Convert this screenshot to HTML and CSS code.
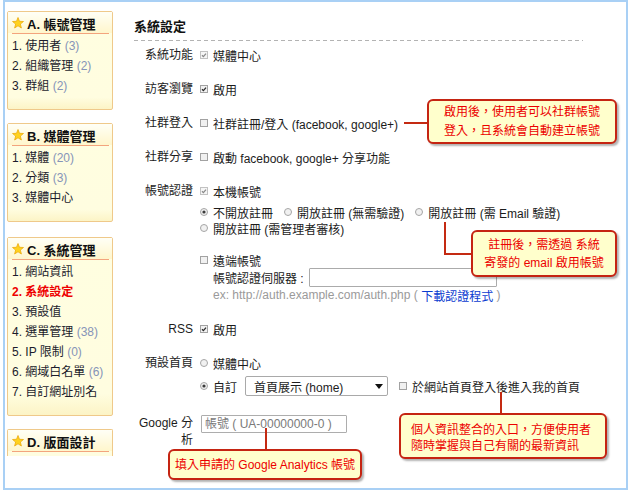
FILE: index.html
```html
<!DOCTYPE html>
<html lang="zh-Hant">
<head>
<meta charset="utf-8">
<title>系統設定</title>
<link rel="stylesheet" href="styles.css">
</head>
<body>
<div class="frame">
  <aside class="sidebar">
    <section class="panel">
      <h3 class="panel-head"><svg class="star" viewBox="0 0 12 12"><polygon points="6,0.5 7.47,4.28 11.5,4.5 8.38,7.07 9.4,11 6,8.8 2.6,11 3.62,7.07 0.5,4.5 4.53,4.28"/></svg>A. 帳號管理</h3>
      <div class="panel-sep"></div>
      <ul class="panel-list">
        <li>1. 使用者 <span class="cnt">(3)</span></li>
        <li>2. 組織管理 <span class="cnt">(2)</span></li>
        <li>3. 群組 <span class="cnt">(2)</span></li>
      </ul>
    </section>
    <section class="panel">
      <h3 class="panel-head"><svg class="star" viewBox="0 0 12 12"><polygon points="6,0.5 7.47,4.28 11.5,4.5 8.38,7.07 9.4,11 6,8.8 2.6,11 3.62,7.07 0.5,4.5 4.53,4.28"/></svg>B. 媒體管理</h3>
      <div class="panel-sep"></div>
      <ul class="panel-list">
        <li>1. 媒體 <span class="cnt">(20)</span></li>
        <li>2. 分類 <span class="cnt">(3)</span></li>
        <li>3. 媒體中心</li>
      </ul>
    </section>
    <section class="panel panel-c">
      <h3 class="panel-head"><svg class="star" viewBox="0 0 12 12"><polygon points="6,0.5 7.47,4.28 11.5,4.5 8.38,7.07 9.4,11 6,8.8 2.6,11 3.62,7.07 0.5,4.5 4.53,4.28"/></svg>C. 系統管理</h3>
      <div class="panel-sep"></div>
      <ul class="panel-list">
        <li>1. 網站資訊</li>
        <li class="active">2. 系統設定</li>
        <li>3. 預設值</li>
        <li>4. 選單管理 <span class="cnt">(38)</span></li>
        <li>5. IP 限制 <span class="cnt">(0)</span></li>
        <li>6. 網域白名單 <span class="cnt">(6)</span></li>
        <li>7. 自訂網址別名</li>
      </ul>
    </section>
    <section class="panel panel-cut">
      <h3 class="panel-head"><svg class="star" viewBox="0 0 12 12"><polygon points="6,0.5 7.47,4.28 11.5,4.5 8.38,7.07 9.4,11 6,8.8 2.6,11 3.62,7.07 0.5,4.5 4.53,4.28"/></svg>D. 版面設計</h3>
      <div class="panel-sep"></div>
    </section>
  </aside>

  <main class="main">
    <h2 class="title">系統設定</h2>
    <div class="form">
      <div class="row">
        <div class="lbl">系統功能</div>
        <div class="val">
          <div class="line"><span class="opt"><svg class="cb dis" viewBox="0 0 8 8"><rect x=".5" y=".5" width="7" height="7"/><path d="M2 4.2l1.4 1.4L6 2.6"/></svg>媒體中心</span></div>
        </div>
      </div>
      <div class="row">
        <div class="lbl">訪客瀏覽</div>
        <div class="val">
          <div class="line"><span class="opt"><svg class="cb" viewBox="0 0 8 8"><rect x=".5" y=".5" width="7" height="7"/><path d="M2 4.2l1.4 1.4L6 2.6"/></svg>啟用</span></div>
        </div>
      </div>
      <div class="row">
        <div class="lbl">社群登入</div>
        <div class="val">
          <div class="line"><span class="opt"><svg class="cb" viewBox="0 0 8 8"><rect x=".5" y=".5" width="7" height="7"/></svg>社群註冊/登入 (facebook, google+)</span></div>
        </div>
      </div>
      <div class="row">
        <div class="lbl">社群分享</div>
        <div class="val">
          <div class="line"><span class="opt"><svg class="cb" viewBox="0 0 8 8"><rect x=".5" y=".5" width="7" height="7"/></svg>啟動 facebook, google+ 分享功能</span></div>
        </div>
      </div>
      <div class="row">
        <div class="lbl">帳號認證</div>
        <div class="val">
          <div class="line"><span class="opt"><svg class="cb dis" viewBox="0 0 8 8"><rect x=".5" y=".5" width="7" height="7"/><path d="M2 4.2l1.4 1.4L6 2.6"/></svg>本機帳號</span></div>
          <div class="line line-sub">
            <span class="opt"><svg class="rb" viewBox="0 0 8 8"><circle cx="4" cy="4" r="3.5"/><circle class="dot" cx="4" cy="4" r="1.6"/></svg>不開放註冊</span>
            <span class="opt"><svg class="rb" viewBox="0 0 8 8"><circle cx="4" cy="4" r="3.5"/></svg>開放註冊 (無需驗證)</span>
            <span class="opt"><svg class="rb" viewBox="0 0 8 8"><circle cx="4" cy="4" r="3.5"/></svg>開放註冊 (需 Email 驗證)</span>
          </div>
          <div class="line">
            <span class="opt"><svg class="rb" viewBox="0 0 8 8"><circle cx="4" cy="4" r="3.5"/></svg>開放註冊 (需管理者審核)</span>
          </div>
          <div class="line line-gap"><span class="opt"><svg class="cb" viewBox="0 0 8 8"><rect x=".5" y=".5" width="7" height="7"/></svg>遠端帳號</span></div>
          <div class="line line-server">帳號認證伺服器 :<input class="server" type="text"></div>
          <div class="line line-hint">ex: http://auth.example.com/auth.php (&nbsp;<a class="link" href="#">下載認證程式</a>&nbsp;)</div>
        </div>
      </div>
      <div class="row">
        <div class="lbl">RSS</div>
        <div class="val">
          <div class="line"><span class="opt"><svg class="cb" viewBox="0 0 8 8"><rect x=".5" y=".5" width="7" height="7"/><path d="M2 4.2l1.4 1.4L6 2.6"/></svg>啟用</span></div>
        </div>
      </div>
      <div class="row">
        <div class="lbl">預設首頁</div>
        <div class="val">
          <div class="line"><span class="opt"><svg class="rb" viewBox="0 0 8 8"><circle cx="4" cy="4" r="3.5"/></svg>媒體中心</span></div>
          <div class="line line-select">
            <span class="opt"><svg class="rb" viewBox="0 0 8 8"><circle cx="4" cy="4" r="3.5"/><circle class="dot" cx="4" cy="4" r="1.6"/></svg>自訂</span>
            <div class="select"><span>首頁展示 (home)</span><i class="caret"></i></div>
            <span class="opt"><svg class="cb" viewBox="0 0 8 8"><rect x=".5" y=".5" width="7" height="7"/></svg>於網站首頁登入後進入我的首頁</span>
          </div>
        </div>
      </div>
      <div class="row row-ga">
        <div class="lbl lbl-two">Google 分析</div>
        <div class="val">
          <input class="ga" type="text" placeholder="帳號 ( UA-00000000-0 )">
        </div>
      </div>
    </div>
  </main>
</div>

<div class="wire w1"></div>
<div class="callout c1">啟用後，使用者可以社群帳號<br>登入，且系統會自動建立帳號</div>

<div class="wire w2a"></div>
<div class="wire w2b"></div>
<div class="callout c2">註冊後，需透過 系統<br>寄發的 email 啟用帳號</div>

<div class="wire w3"></div>
<div class="callout c3">個人資訊整合的入口，方便使用者<br>隨時掌握與自己有關的最新資訊</div>

<div class="wire w4"></div>
<div class="callout c4">填入申請的 Google Analytics 帳號</div>
</body>
</html>
```

FILE: styles.css
```css
* { box-sizing: border-box; }

html, body {
  margin: 0;
  background: #fff;
}

body {
  position: relative;
  width: 632px;
  height: 494px;
  overflow: hidden;
  font-family: "Liberation Sans", "Noto Sans CJK TC", sans-serif;
  font-size: 12px;
  color: #1c1c1c;
}

.frame {
  margin-left: 3px;
  width: 625px;
  height: 490px;
  border: 2px solid #a9d0f5;
  display: flex;
  align-items: flex-start;
}

/* ---------- sidebar ---------- */
.sidebar {
  width: 106px;
  margin-left: 2px;
  padding-top: 9px;
  display: flex;
  flex-direction: column;
  gap: 13px;
  flex: none;
}

.panel {
  border: 1px solid #efc98a;
  border-radius: 2px;
  background: linear-gradient(#fffee0 0, #fffde0 88%, #fcf4c6 100%);
}

.panel-c { margin-top: 2px; }

.panel-cut {
  border-bottom: 0;
  border-radius: 2px 2px 0 0;
  padding-bottom: 4px;
  background: #fffde0;
}

.panel-head {
  display: flex;
  align-items: center;
  gap: 3px;
  height: 21px;
  margin: 0;
  padding: 1px 0 0 4px;
  font-size: 13px;
  font-weight: bold;
  color: #111;
  background: linear-gradient(#fffff6, #fff6cc);
}

.star {
  width: 12px;
  height: 12px;
  flex: none;
}
.star polygon {
  fill: #ffd21e;
  stroke: #e9a300;
  stroke-width: 0.7;
  stroke-linejoin: round;
}

.panel-sep {
  height: 1px;
  margin: 0 3px 0 4px;
  background: #f3a47d;
}

.panel-list {
  list-style: none;
  margin: 0;
  padding: 2px 0 13px 4px;
  line-height: 20px;
  white-space: nowrap;
  color: #1c1c2c;
}

.panel-list .cnt { color: #8694b8; }

.panel-list .active {
  color: #ee0000;
  font-weight: bold;
}

/* ---------- main ---------- */
.main {
  width: 449px;
  margin-left: 21px;
  padding-top: 17px;
  flex: none;
}

.title {
  margin: 0;
  font-size: 13px;
  font-weight: bold;
  line-height: 16px;
  padding-bottom: 6px;
  color: #111;
  background: repeating-linear-gradient(90deg, #b3b3b3 0 4px, transparent 4px 7px) left bottom / 100% 1px no-repeat;
}

.form {
  margin-top: 6px;
  display: flex;
  flex-direction: column;
  gap: 18px;
}

.row {
  display: flex;
  align-items: flex-start;
}

.lbl {
  width: 59px;
  flex: none;
  text-align: right;
  line-height: 16px;
}

.lbl-two { line-height: 17px; }

.val {
  margin-left: 7px;
  display: flex;
  flex-direction: column;
  align-items: flex-start;
}

.line {
  display: flex;
  align-items: center;
  height: 16px;
  gap: 11px;
  white-space: nowrap;
}

.line-sub { margin-top: 5px; }
.line-gap { margin-top: 16px; }

.opt {
  display: inline-flex;
  align-items: center;
  gap: 5px;
}

.cb, .rb {
  width: 8px;
  height: 8px;
  flex: none;
}

.cb rect {
  fill: #f1f1f1;
  stroke: #a2a2a2;
  stroke-width: 1;
}
.cb path {
  fill: none;
  stroke: #2a2a2a;
  stroke-width: 1.3;
}
.cb.dis rect { fill: #f6f6f6; stroke: #c2c2c2; }
.cb.dis path { stroke: #8a8a8a; }

.rb circle {
  fill: #f1f1f1;
  stroke: #a5a5a5;
  stroke-width: 1;
}
.rb .dot {
  fill: #3a3a3a;
  stroke: none;
}

.line-server {
  height: 19px;
  gap: 0;
  padding-left: 13px;
}

.server {
  width: 188px;
  height: 19px;
  margin: 0 0 0 5px;
  padding: 0 3px;
  border: 1px solid #ababab;
  border-radius: 1px;
  font: inherit;
  background: #fff;
}

.line-hint {
  gap: 0;
  padding-left: 13px;
  color: #9a9a9a;
}

.link {
  color: #0b3bd0;
  text-decoration: none;
}

.line-select {
  height: 20px;
  margin-top: 5px;
  gap: 0;
}

.select {
  width: 143px;
  height: 20px;
  margin: 0 11px 0 8px;
  padding: 0 4px 0 8px;
  display: flex;
  align-items: center;
  border: 1px solid #a9a9a9;
  border-radius: 2px;
  background: #fff;
}

.caret {
  margin-left: auto;
  width: 0;
  height: 0;
  border-left: 4px solid transparent;
  border-right: 4px solid transparent;
  border-top: 5px solid #111;
}

.row-ga { margin-top: 1px; }

.ga {
  width: 146px;
  height: 18px;
  margin: 0 0 0 1px;
  padding: 0 3px;
  border: 1px solid #adadad;
  border-radius: 1px;
  font: inherit;
  color: #333;
  background: #fff;
}
.ga::placeholder { color: #7a7a7a; }

/* ---------- callouts ---------- */
.callout {
  position: absolute;
  border: 2px solid #c52412;
  border-radius: 6px;
  background: #ffffcc;
  color: #ec0000;
  text-align: center;
  white-space: nowrap;
  box-shadow: 2px 2px 2px rgba(0, 0, 0, 0.3);
}

.c1 {
  left: 427px;
  top: 99px;
  width: 190px;
  padding: 2px 0 1px;
  line-height: 19px;
}

.c2 {
  left: 471px;
  top: 230px;
  width: 146px;
  padding: 4px 0 3px;
  line-height: 18px;
}

.c3 {
  left: 399px;
  top: 413px;
  width: 208px;
  padding: 7px 10px 3px;
  line-height: 16px;
  text-align: left;
}

.c4 {
  left: 168px;
  top: 449px;
  width: 194px;
  padding: 5px 0 4px;
  line-height: 18px;
}

.wire {
  position: absolute;
  background: #c42a12;
}

.w1 { left: 404px; top: 122px; width: 24px; height: 2px; }
.w2a { left: 444px; top: 222px; width: 2px; height: 33px; }
.w2b { left: 444px; top: 253px; width: 28px; height: 2px; }
.w3 { left: 500px; top: 392px; width: 2px; height: 22px; }
.w4 { left: 265px; top: 428px; width: 2px; height: 22px; }
```
